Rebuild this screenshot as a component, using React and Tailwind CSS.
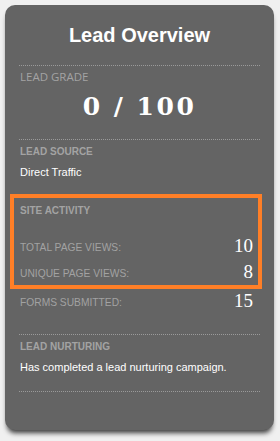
import React from "react";

const arial = { fontFamily: '"Liberation Sans", Arial, sans-serif' };

function Sep({ className = "" }) {
  return <div className={"border-t border-dotted border-[#9a9a9a] " + className} />;
}

function Row({ label, value, className = "" }) {
  return (
    <div className={"flex items-end justify-between " + className}>
      <span
        className="text-[10.25px] leading-[13px] text-[#a2a2a2] mb-[2px]"
        style={arial}
      >
        {label}
      </span>
      <span
        className="text-[19px] leading-[20px] text-white"
        style={{ fontFamily: '"Liberation Serif", "DejaVu Serif", serif' }}
      >
        {value}
      </span>
    </div>
  );
}

export default function App() {
  return (
    <div className="h-[441px] w-[280px] bg-[#f0f0f0] pt-[5px] pl-[5px]">
      <div className="w-[269px] h-[425px] rounded-[10px] bg-[#646464] px-[14px] pt-[18px] shadow-[0_5px_5px_-2px_rgba(0,0,0,0.75)]">
        <h1
          className="text-center text-[20px] leading-[24px] font-bold text-white"
          style={arial}
        >
          Lead Overview
        </h1>
        <Sep className="mt-[18px]" />
        <div
          className="mt-[3px] text-[11.5px] leading-[15px] text-[#a3a3a3] pl-px"
          style={{ fontFamily: '"Open Sans", "Noto Sans", sans-serif' }}
        >
          LEAD GRADE
        </div>
        <div
          className="mt-[8px] text-center text-[25px] leading-[30px] font-bold text-white tracking-[2.5px]"
          style={{ fontFamily: '"DejaVu Serif", "Liberation Serif", serif' }}
        >
          0 / 100
        </div>
        <Sep className="mt-[17px]" />
        <div
          className="mt-[5px] text-[10px] leading-[13px] font-bold text-[#a3a3a3] pl-px"
          style={arial}
        >
          LEAD SOURCE
        </div>
        <div className="mt-[7px] text-[11px] leading-[14px] text-white pl-px" style={arial}>
          Direct Traffic
        </div>
        <div className="mt-[15px] -ml-[9px] -mr-[2px] border-4 border-[#ff7f27] pl-[6px] pr-[5px] pt-[6px] pb-[3px]">
          <div className="text-[10px] leading-[13px] font-bold text-[#a3a3a3]" style={arial}>
            SITE ACTIVITY
          </div>
          <Row label="TOTAL PAGE VIEWS:" value="10" className="mt-[19px]" />
          <Row label="UNIQUE PAGE VIEWS:" value="8" className="mt-[6px]" />
        </div>
        <Row label="FORMS SUBMITTED:" value="15" className="mt-[2px] pl-px pr-[7px]" />
        <Sep className="mt-[23px]" />
        <div
          className="mt-[5px] text-[10px] leading-[13px] font-bold text-[#a3a3a3] pl-px"
          style={arial}
        >
          LEAD NURTURING
        </div>
        <div className="mt-[7px] text-[11px] leading-[14px] text-white pl-px" style={arial}>
          Has completed a lead nurturing campaign.
        </div>
        <Sep className="mt-[17px]" />
      </div>
    </div>
  );
}
